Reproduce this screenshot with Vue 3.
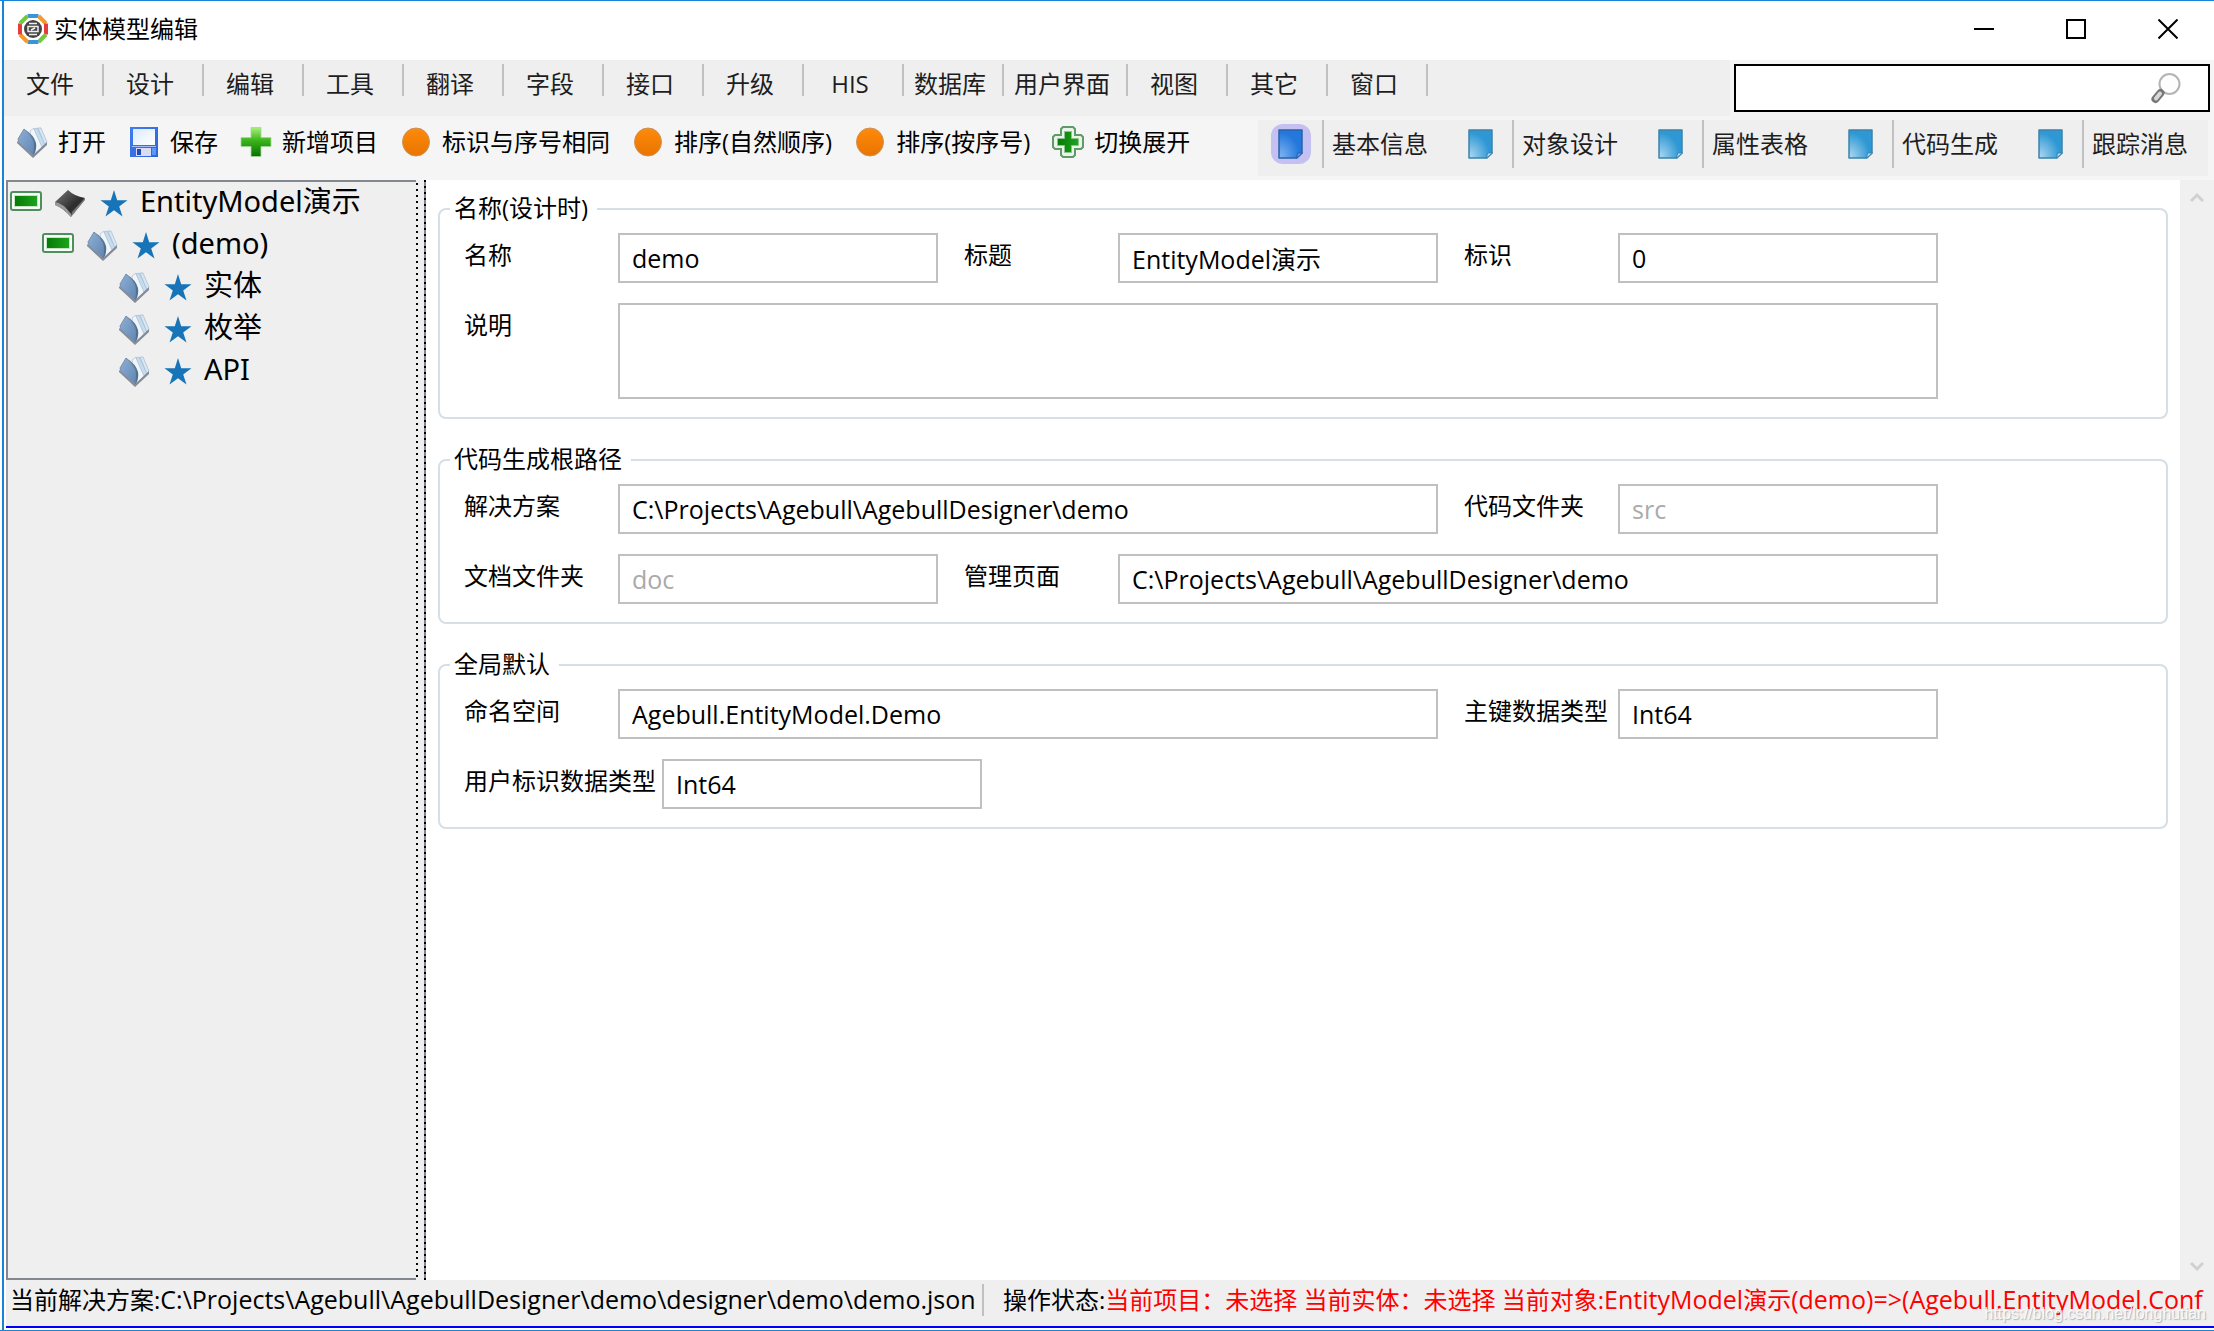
<script setup>
import { ref } from 'vue'

const menus = ['文件', '设计', '编辑', '工具', '翻译', '字段', '接口', '升级', 'HIS', '数据库', '用户界面', '视图', '其它', '窗口']

const tools = [
  { icon: 'book', text: '打开' },
  { icon: 'disk', text: '保存' },
  { icon: 'plus', text: '新增项目' },
  { icon: 'dot', text: '标识与序号相同' },
  { icon: 'dot', text: '排序(自然顺序)' },
  { icon: 'dot', text: '排序(按序号)' },
  { icon: 'cross', text: '切换展开' },
]

const views = ['基本信息', '对象设计', '属性表格', '代码生成', '跟踪消息']
const activeView = ref(0)

const tree = [
  { level: 0, toggle: true, icon: 'chip', text: 'EntityModel演示' },
  { level: 1, toggle: true, icon: 'book', text: '(demo)' },
  { level: 2, toggle: false, icon: 'book', text: '实体' },
  { level: 2, toggle: false, icon: 'book', text: '枚举' },
  { level: 2, toggle: false, icon: 'book', text: 'API' },
]

const root = 'C:\\Projects\\Agebull\\AgebullDesigner\\demo'
const groups = [
  {
    title: '名称(设计时)',
    rows: [
      [
        { id: 'name', label: '名称', value: 'demo' },
        { id: 'caption', label: '标题', value: 'EntityModel演示' },
        { id: 'key', label: '标识', value: '0' },
      ],
      [{ id: 'remark', label: '说明', value: '', area: true }],
    ],
  },
  {
    title: '代码生成根路径',
    rows: [
      [
        { id: 'solution', label: '解决方案', value: root, wide: true },
        { id: 'src', label: '代码文件夹', value: '', hint: 'src' },
      ],
      [
        { id: 'doc', label: '文档文件夹', value: '', hint: 'doc' },
        { id: 'page', label: '管理页面', value: root, wide: true },
      ],
    ],
  },
  {
    title: '全局默认',
    rows: [
      [
        { id: 'ns', label: '命名空间', value: 'Agebull.EntityModel.Demo', wide: true },
        { id: 'pk', label: '主键数据类型', value: 'Int64' },
      ],
      [{ id: 'uid', label: '用户标识数据类型', value: 'Int64' }],
    ],
  },
]
</script>

<template>
  <div class="window">
    <svg class="defs" width="0" height="0" aria-hidden="true">
      <defs>
        <linearGradient id="gBlue" x1="0" y1="0" x2="1" y2="1">
          <stop offset="0" stop-color="#8fb0d4" /><stop offset="1" stop-color="#5f86b4" />
        </linearGradient>
        <linearGradient id="gGreen" x1="0" y1="0" x2="0" y2="1">
          <stop offset="0" stop-color="#a6f07a" /><stop offset="0.45" stop-color="#3bb41a" /><stop offset="1" stop-color="#067004" />
        </linearGradient>
        <linearGradient id="gOrange" x1="0" y1="0" x2="0" y2="1">
          <stop offset="0" stop-color="#ff8a0a" /><stop offset="1" stop-color="#e87400" />
        </linearGradient>
        <linearGradient id="gDisk" x1="0" y1="0" x2="1" y2="1">
          <stop offset="0" stop-color="#3f7df0" /><stop offset="1" stop-color="#2f62d8" />
        </linearGradient>
        <linearGradient id="gLabel" x1="0" y1="0" x2="1" y2="1">
          <stop offset="0" stop-color="#dcebfb" /><stop offset="1" stop-color="#ffffff" />
        </linearGradient>
        <linearGradient id="gBar" x1="0" y1="0" x2="1" y2="0">
          <stop offset="0" stop-color="#067a06" /><stop offset="1" stop-color="#1ea41e" />
        </linearGradient>
        <linearGradient id="gChip" x1="0" y1="0" x2="1" y2="1">
          <stop offset="0" stop-color="#7a7a7a" /><stop offset="0.6" stop-color="#2c2c2c" /><stop offset="1" stop-color="#555" />
        </linearGradient>
        <radialGradient id="gPage" cx="0.05" cy="0.95" r="0.85">
          <stop offset="0" stop-color="#a9d6f0" /><stop offset="1" stop-color="#2f98d4" />
        </radialGradient>
        <radialGradient id="gPageOn" cx="0.05" cy="0.95" r="0.85">
          <stop offset="0" stop-color="#7fb4f0" /><stop offset="1" stop-color="#2478dc" />
        </radialGradient>
        <symbol id="i-book" viewBox="0 0 32 32">
          <path d="M14 5 L25 1 L31 17 L17 30 Z" fill="#dbe8f3" />
          <path d="M14 5 L18 2 L27 20 L18 29 Z" fill="#eef5fb" stroke="#a3b6c9" stroke-width="0.6" />
          <path d="M18 3 L21 2 L29 18 L26 21 Z" fill="#c6dcef" stroke="#9fb4c9" stroke-width="0.6" />
          <path d="M22 2 L25 2 L31 16 L29 19 Z" fill="#d9e7f3" stroke="#9fb4c9" stroke-width="0.6" />
          <path d="M2 13 L8 3 Q14 7 17 14 Q19 20 17 29 L3 17 Z" fill="url(#gBlue)" stroke="#6983a3" stroke-width="0.8" />
          <path d="M8 3 Q18 9 20 17 Q21 23 18 29 L17 29 Q19 20 17 14 Q14 7 8 3 Z" fill="#55708f" />
          <path d="M1 15 L17 29 L31 16 L31 19 L17 32 L1 17 Z" fill="#868c95" />
        </symbol>
        <symbol id="i-disk" viewBox="0 0 32 32">
          <rect x="2" y="1" width="28" height="30" fill="url(#gDisk)" />
          <rect x="5" y="3" width="22" height="16" fill="url(#gLabel)" />
          <rect x="4" y="20" width="24" height="1" fill="#9fc0fa" />
          <rect x="8" y="22" width="15" height="8" fill="#d8dcf2" />
          <rect x="9" y="23" width="4" height="6" fill="#2848b8" />
          <rect x="24" y="22" width="4" height="7" fill="#5d97f8" />
        </symbol>
        <symbol id="i-plus" viewBox="0 0 32 32">
          <path d="M11 1.500h10v10h10v9h-10v10h-10v-10h-10v-9h10z" fill="url(#gGreen)" stroke="#a7d69a" stroke-width="0.8" />
        </symbol>
        <symbol id="i-dot" viewBox="0 0 32 32">
          <ellipse cx="16" cy="16" rx="13.500" ry="14" fill="url(#gOrange)" stroke="#c89460" stroke-width="1" />
        </symbol>
        <symbol id="i-cross" viewBox="0 0 32 32">
          <path d="M11 1h10l2 2v6h6l2 2v10l-2 2h-6v6l-2 2h-10l-2-2v-6h-6l-2-2v-10l2-2h6v-6z" fill="#e8f4e8" stroke="#5f9a68" stroke-width="2" />
          <path d="M12.500 5.500h7v7h7v7h-7v7h-7v-7h-7v-7h7z" fill="url(#gBar)" stroke="#8cc48c" stroke-width="1" />
        </symbol>
        <symbol id="i-chip" viewBox="0 0 32 32">
          <path d="M1 15 L14 3 Q20 9 31 11 L20 26 Q17 28 17 30 Q8 20 1 18 Z" fill="url(#gChip)" />
          <path d="M1 15 Q9 16 17 27 L17 30 Q9 21 1 18 Z" fill="#9a9a9a" />
          <path d="M17 30 L31 13 L31 11 L18 25 Z" fill="#777" />
        </symbol>
        <symbol id="i-star" viewBox="0 0 32 32">
          <path d="M16 3 L19.200 13.200 H29.500 L21.200 19.400 L24.500 29.500 L16 23.300 L7.500 29.500 L10.800 19.400 L2.500 13.200 H12.800 Z" fill="#1874b8" />
        </symbol>
      </defs>
    </svg>

    <header class="titlebar">
      <svg class="logo" viewBox="0 0 30 30" aria-hidden="true">
        <g fill="none" stroke-width="4">
          <path d="M9.500 2H20.500" stroke="#3a94dc" />
          <path d="M20.500 2L28 9.500" stroke="#f59a2c" />
          <path d="M28 9.500V20.500" stroke="#e63c3c" />
          <path d="M28 20.500L20.500 28" stroke="#72c83c" />
          <path d="M20.500 28H9.500" stroke="#3a94dc" />
          <path d="M9.500 28L2 20.500" stroke="#f59a2c" />
          <path d="M2 20.500V9.500" stroke="#e63c3c" />
          <path d="M2 9.500L9.500 2" stroke="#72c83c" />
        </g>
        <circle cx="15" cy="15" r="9" fill="#444" />
        <path d="M11 9.500H19M10 12.500H20V17.500H10ZM11 20.500H19M13 16L17 14" fill="none" stroke="#eee" stroke-width="1.500" />
      </svg>
      <h1>实体模型编辑</h1>
      <div class="controls">
        <button type="button" aria-label="最小化"><svg width="20" height="20" viewBox="0 0 20 20"><path d="M0 10H20" /></svg></button>
        <button type="button" aria-label="最大化"><svg width="20" height="20" viewBox="0 0 20 20"><rect x="1" y="1" width="18" height="18" /></svg></button>
        <button type="button" aria-label="关闭"><svg width="20" height="20" viewBox="0 0 20 20"><path d="M0.500 0.500L19.500 19.500M19.500 0.500L0.500 19.500" /></svg></button>
      </div>
    </header>

    <div class="menurow">
      <nav class="menubar">
        <button v-for="m in menus" :key="m" type="button">{{ m }}</button>
      </nav>
      <div class="search">
        <input type="text" aria-label="搜索" />
        <svg width="32" height="32" viewBox="0 0 32 32" aria-hidden="true">
          <circle cx="19.500" cy="12" r="10" fill="#fdfdfd" stroke="#b4b4b4" stroke-width="2" />
          <path d="M12.500 19.500L9.500 22.500" stroke="#777" stroke-width="4" />
          <path d="M10.500 21L5.500 27" stroke="#777" stroke-width="8" stroke-linecap="round" />
          <path d="M10 21.500L6 26.500" stroke="#d8d8d8" stroke-width="4" stroke-linecap="round" />
        </svg>
      </div>
    </div>

    <div class="toolrow">
      <div class="tools">
        <button v-for="t in tools" :key="t.text" type="button">
          <svg width="32" height="32" aria-hidden="true"><use :href="'#i-' + t.icon" /></svg>
          <span>{{ t.text }}</span>
        </button>
      </div>
      <div class="views">
        <button v-for="(v, i) in views" :key="v" type="button" :class="{ on: i === activeView }" @click="activeView = i">
          <span class="pageicon">
            <svg width="28" height="32" viewBox="0 0 28 32" aria-hidden="true">
              <path d="M2 2H25V25L20 30H2Z" :fill="i === activeView ? 'url(#gPageOn)' : 'url(#gPage)'" :stroke="i === activeView ? '#2a62ac' : '#3c83ac'" stroke-width="1.500" stroke-linejoin="round" />
              <path d="M19.500 30L20.500 25H25.500Z" :fill="i === activeView ? '#5b9bf0' : '#b5dcf2'" :stroke="i === activeView ? '#2a62ac' : '#3c83ac'" />
            </svg>
          </span>
          <span class="viewtext">{{ v }}</span>
        </button>
      </div>
    </div>

    <div class="body">
      <aside class="sidebar">
        <ul>
          <li v-for="n in tree" :key="n.text" :class="'level' + n.level">
            <button v-if="n.toggle" type="button" class="toggle" aria-label="折叠">
              <svg width="32" height="20" viewBox="0 0 32 20">
                <rect x="1" y="1" width="30" height="18" rx="2" fill="#f8fcf8" stroke="#4f8f5e" stroke-width="2" />
                <rect x="4.500" y="4.500" width="23" height="11" fill="url(#gBar)" stroke="#c4e4c4" />
              </svg>
            </button>
            <span v-else class="toggle"></span>
            <svg width="32" height="32" aria-hidden="true"><use :href="'#i-' + n.icon" /></svg>
            <svg width="32" height="32" aria-hidden="true"><use href="#i-star" /></svg>
            <span class="nodetext">{{ n.text }}</span>
          </li>
        </ul>
      </aside>
      <div class="splitter"></div>

      <main class="content">
        <fieldset v-for="g in groups" :key="g.title">
          <legend>{{ g.title }}</legend>
          <div v-for="(r, i) in g.rows" :key="i" class="row">
            <div v-for="f in r" :key="f.id" class="field">
              <label :for="f.id">{{ f.label }}</label>
              <textarea v-if="f.area" :id="f.id" :value="f.value"></textarea>
              <input v-else :id="f.id" type="text" :value="f.value" :placeholder="f.hint" :class="{ wide: f.wide }" />
            </div>
          </div>
        </fieldset>
      </main>

      <div class="scrollbar">
        <svg width="14" height="12" viewBox="0 0 14 12"><path d="M1 9L7 3L13 9" /></svg>
        <svg width="14" height="12" viewBox="0 0 14 12"><path d="M1 3L7 9L13 3" /></svg>
      </div>
    </div>

    <footer class="status">
      <span class="solution">当前解决方案:<span class="latin">C:\Projects\Agebull\AgebullDesigner\demo\designer\demo\demo.json</span></span>
      <span class="state">操作状态:<em>当前项目：未选择 当前实体：未选择 当前对象:<span class="latin">EntityModel</span>演示<span class="latin">(demo)=&gt;(Agebull.EntityModel.Conf</span></em></span>
      <span class="mark">https://blog.csdn.net/longhutian</span>
    </footer>
  </div>
</template>

<style>
body {
  margin: 0;
}
</style>

<style scoped>
.window {
  box-sizing: border-box;
  display: flex;
  flex-direction: column;
  height: 100vh;
  padding-left: 2px;
  border-top: 1px solid #1883d7;
  border-bottom: 1px solid #1883d7;
  background: linear-gradient(#1883d7, #1883d7) 2px 0 / 2px 100% no-repeat #fff;
  color: #000;
  font: 24px/32px 'Open Sans', 'Noto Sans CJK SC', sans-serif;
  white-space: nowrap;
  overflow: hidden;
}
.defs {
  position: absolute;
}
button {
  margin: 0;
  padding: 0;
  border: 0;
  background: none;
  color: inherit;
  font: inherit;
}
svg {
  display: block;
  flex: none;
}

.titlebar {
  box-sizing: border-box;
  display: flex;
  align-items: center;
  height: 59px;
  padding: 0 0 3px 16px;
}
.logo {
  width: 30px;
  height: 30px;
}
h1 {
  margin: 0 0 0 6px;
  font-size: 24px;
  font-weight: 400;
}
.controls {
  display: flex;
  margin-left: auto;
}
.controls button {
  display: flex;
  align-items: center;
  justify-content: center;
  width: 92px;
  height: 56px;
}
.controls svg {
  fill: none;
  stroke: #000;
  stroke-width: 2;
}

.menurow {
  display: flex;
  height: 56px;
  margin-left: 2px;
  background: #f5f5f5;
}
.menubar {
  display: flex;
  flex: 1;
  background: #efefef;
  color: #1e1e1e;
}
.menubar button {
  height: 32px;
  min-width: 100px;
  margin-top: 4px;
  padding: 4px 16px 0 10px;
  border-right: 2px solid #c0c0c0;
}
.search {
  box-sizing: border-box;
  display: flex;
  align-items: center;
  width: 476px;
  height: 48px;
  margin: 4px;
  padding-right: 26px;
  border: 2px solid #000;
  background: #fff;
}
.search input {
  flex: 1;
  min-width: 0;
  border: 0;
  outline: 0;
  background: none;
  font: inherit;
}

.toolrow {
  display: flex;
  justify-content: space-between;
  height: 64px;
  margin-left: 2px;
  background: #f5f5f5;
}
.tools {
  display: flex;
  gap: 22px;
  height: 52px;
  padding-left: 12px;
}
.tools button {
  display: flex;
  align-items: center;
  gap: 10px;
}
.views {
  display: flex;
  height: 56px;
  margin: 4px 6px 0 0;
  background: #efefef;
  color: #1e1e1e;
}
.views button {
  display: flex;
  width: 190px;
  height: 48px;
}
.pageicon {
  box-sizing: border-box;
  display: flex;
  align-items: center;
  justify-content: center;
  width: 40px;
  height: 40px;
  margin: 4px 11px 0 13px;
  border-radius: 12px;
}
.on .pageicon {
  background: #c4c0f2;
}
.viewtext {
  height: 48px;
  padding-left: 8px;
  border-left: 2px solid #c0c0c0;
  line-height: 48px;
}

.body {
  display: flex;
  flex: 1;
  min-height: 0;
}
.sidebar {
  box-sizing: border-box;
  width: 410px;
  margin-left: 4px;
  border: 2px solid #828790;
  border-right: 0;
  background: #efefef;
}
.sidebar ul {
  margin: 0;
  padding: 0 0 0 2px;
  list-style: none;
}
.sidebar li {
  display: flex;
  align-items: center;
  gap: 12px;
  height: 42px;
}
.level1 {
  padding-left: 32px;
}
.level2 {
  padding-left: 64px;
}
.toggle {
  width: 32px;
  height: 24px;
  padding-bottom: 6px;
}
.nodetext {
  margin-left: -2px;
  padding-bottom: 4px;
  font-family: 'Noto Sans', 'Noto Sans CJK SC', sans-serif;
  font-size: 29px;
  line-height: 38px;
}
.splitter {
  width: 10px;
  background:
    repeating-linear-gradient(#000 0 2px, transparent 2px 6px) 0 3px / 2px 100% no-repeat,
    repeating-linear-gradient(#000 0 2px, #828790 2px 6px) 100% 0 / 2px 100% no-repeat,
    #efefef;
}
.content {
  flex: 1;
  min-width: 0;
  padding: 13px 12px 0;
}
fieldset {
  display: flex;
  flex-direction: column;
  gap: 20px;
  margin: 0 0 25px;
  padding: 8px 10px 18px;
  border: 2px solid #d5dfe5;
  border-radius: 8px;
}
legend {
  box-sizing: border-box;
  height: 32px;
  padding: 0 9px 0 4px;
  line-height: 30px;
}
.row {
  display: flex;
  gap: 26px;
  padding-left: 14px;
}
.field {
  display: flex;
  align-items: flex-start;
}
label {
  box-sizing: border-box;
  min-width: 154px;
  padding-right: 6px;
  line-height: 44px;
}
.field input,
textarea {
  box-sizing: border-box;
  width: 320px;
  height: 50px;
  margin: 0;
  padding: 0 12px;
  border: 2px solid #c0c0c0;
  border-radius: 0;
  outline: 0;
  background: #fff;
  color: #000;
  font: inherit;
  font-size: 25px;
}
.field input.wide {
  width: 820px;
}
.field input::placeholder {
  color: #aaa;
  opacity: 1;
}
textarea {
  width: 1320px;
  height: 96px;
  resize: none;
}
.scrollbar {
  box-sizing: border-box;
  display: flex;
  flex-direction: column;
  align-items: center;
  justify-content: space-between;
  width: 34px;
  padding: 12px 0 8px;
  background: #f0f0f0;
}
.scrollbar path {
  fill: none;
  stroke: #d0d0d0;
  stroke-width: 3;
}

.status {
  position: relative;
  display: flex;
  height: 46px;
  margin: 0 0 2px 4px;
  padding: 0 4px;
  border-bottom: 2px solid #00f;
  background: #efefef;
  line-height: 38px;
}
.solution {
  flex: none;
  height: 32px;
  width: 972px;
  margin-top: 4px;
  border-right: 2px solid #c0c0c0;
  line-height: 30px;
}
.state {
  flex: 1;
  min-width: 0;
  margin-left: 19px;
  overflow: hidden;
}
.latin {
  font-size: 25px;
}
em {
  color: #f00;
  font-style: normal;
}
.mark {
  position: absolute;
  right: 8px;
  bottom: 2px;
  color: rgba(255, 255, 255, 0.85);
  font: 16px/20px 'Liberation Sans', sans-serif;
  text-shadow: 1px 1px 1px rgba(120, 120, 120, 0.5);
}
</style>
